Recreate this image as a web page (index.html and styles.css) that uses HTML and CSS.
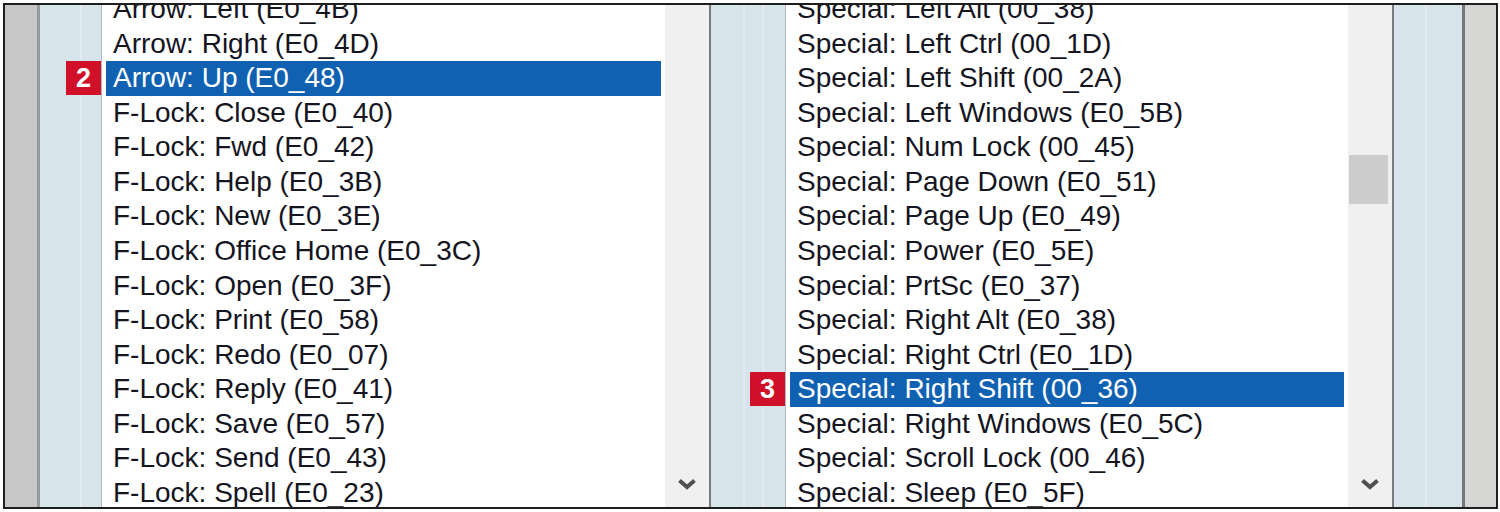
FILE: index.html
```html
<!DOCTYPE html>
<html lang="en">
<head>
    <meta charset="UTF-8">
    <title>Key Mapping Lists</title>
    <link rel="stylesheet" href="styles.css">
</head>
<body>

<div class="frame">
    <div class="side side-left"></div>

    <div class="panel">
        <!-- Left list -->
        <div class="listbox">
            <ul class="items">
                <li>Arrow: Left (E0_4B)</li>
                <li>Arrow: Right (E0_4D)</li>
                <li class="selected"><span class="badge">2</span>Arrow: Up (E0_48)</li>
                <li>F-Lock: Close (E0_40)</li>
                <li>F-Lock: Fwd (E0_42)</li>
                <li>F-Lock: Help (E0_3B)</li>
                <li>F-Lock: New (E0_3E)</li>
                <li>F-Lock: Office Home (E0_3C)</li>
                <li>F-Lock: Open (E0_3F)</li>
                <li>F-Lock: Print (E0_58)</li>
                <li>F-Lock: Redo (E0_07)</li>
                <li>F-Lock: Reply (E0_41)</li>
                <li>F-Lock: Save (E0_57)</li>
                <li>F-Lock: Send (E0_43)</li>
                <li>F-Lock: Spell (E0_23)</li>
            </ul>
            <div class="scrollbar">
                <svg class="chevron" width="20" height="12" viewBox="0 0 20 12">
                    <path d="M2.5 2.5 L10 9 L17.5 2.5" fill="none" stroke="#505050" stroke-width="4"/>
                </svg>
            </div>
        </div>

        <!-- Right list -->
        <div class="listbox listbox-right">
            <ul class="items">
                <li>Special: Left Alt (00_38)</li>
                <li>Special: Left Ctrl (00_1D)</li>
                <li>Special: Left Shift (00_2A)</li>
                <li>Special: Left Windows (E0_5B)</li>
                <li>Special: Num Lock (00_45)</li>
                <li>Special: Page Down (E0_51)</li>
                <li>Special: Page Up (E0_49)</li>
                <li>Special: Power (E0_5E)</li>
                <li>Special: PrtSc (E0_37)</li>
                <li>Special: Right Alt (E0_38)</li>
                <li>Special: Right Ctrl (E0_1D)</li>
                <li class="selected"><span class="badge">3</span>Special: Right Shift (00_36)</li>
                <li>Special: Right Windows (E0_5C)</li>
                <li>Special: Scroll Lock (00_46)</li>
                <li>Special: Sleep (E0_5F)</li>
            </ul>
            <div class="scrollbar">
                <div class="thumb"></div>
                <svg class="chevron" width="20" height="12" viewBox="0 0 20 12">
                    <path d="M2.5 2.5 L10 9 L17.5 2.5" fill="none" stroke="#505050" stroke-width="4"/>
                </svg>
            </div>
        </div>
    </div>

    <div class="side side-right"></div>
</div>

</body>
</html>
```

FILE: styles.css
```css
body {
    margin: 0;
    padding: 0;
    background-color: #fff;
    font-family: "Liberation Sans", Arial, sans-serif;
}

/* Outer frame */
.frame {
    display: flex;
    height: 506px;
    box-sizing: border-box;
    margin: 3px 2px 3px 3px;
    border: 2px solid #1e1e1e;
    overflow: hidden;
}

.side {
    flex: 0 0 auto;
}

.side-left {
    width: 32px;
    background-color: #c7c7c7;
}

.side-right {
    width: 31px;
    background-color: #d6d6d5;
}

/* Blue dialog panel */
.panel {
    flex: 1;
    display: flex;
    gap: 74px;
    padding: 0 68px 0 61px;
    border-left: 3px solid #959aa0;
    border-right: 3px solid #72777c;
    background-color: #d8e4ec;
    background-image:
        linear-gradient(#e1ebf1, #e1ebf1),
        linear-gradient(#e1ebf1, #e1ebf1),
        linear-gradient(#e1ebf1, #e1ebf1),
        linear-gradient(#e1ebf1, #e1ebf1);
    background-size: 2px 100%;
    background-repeat: no-repeat;
    background-position: 40px 0, 703px 0, 722px 0, 1385px 0;
}

/* List boxes */
.listbox {
    display: flex;
    width: 610px;
    box-sizing: border-box;
    border-left: 1px solid #b4b9be;
    border-right: 2px solid #767b80;
    background-color: #fff;
}

.listbox-right {
    width: 609px;
}

.items {
    flex: 1;
    list-style: none;
    margin: -13px 0 0 0;
    padding: 0 4px;
}

.items li {
    position: relative;
    height: 34.57px;
    line-height: 34.57px;
    padding-left: 7px;
    font-size: 28px;
    color: #15151f;
    white-space: nowrap;
}

.items li.selected {
    background-color: #1061b2;
    color: #fff;
}

.badge {
    position: absolute;
    top: 0;
    right: 100%;
    margin-right: 5px;
    width: 35px;
    height: 34px;
    background-color: #cf1028;
    color: #fff;
    font-weight: bold;
    font-size: 27px;
    line-height: 35px;
    text-align: center;
}

.scrollbar {
    width: 44px;
    display: flex;
    flex-direction: column;
    align-items: center;
    background-color: #f0f0f0;
}

.thumb {
    width: 39px;
    height: 49px;
    margin-top: 150px;
    margin-right: 4px;
    background-color: #cdcdcd;
}

.chevron {
    margin-top: auto;
    margin-bottom: 17px;
}
```
